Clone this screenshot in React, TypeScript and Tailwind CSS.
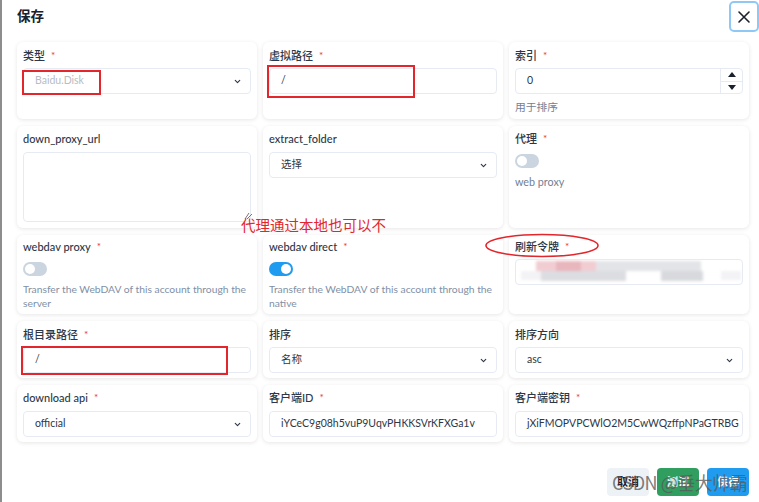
import React from "react";

const FONT = { fontFamily: 'Lato, "Noto Sans CJK SC", "Noto Sans", sans-serif' };

function Label({ text, req }: { text: string; req?: boolean }) {
  return (
    <div className="h-[16px] flex items-center text-[11px] text-[#2d3748] font-medium leading-none">
      <span>{text}</span>
      {req && <span className="ml-[6px] text-[#e53e3e] text-[10px]">*</span>}
    </div>
  );
}

function Chevron() {
  return (
    <svg width="9" height="9" viewBox="0 0 24 24" fill="none" stroke="#2d3748" strokeWidth="3" strokeLinecap="round" strokeLinejoin="round">
      <path d="M6 9l6 6 6-6" />
    </svg>
  );
}

function Input({ value, muted }: { value: string; muted?: boolean }) {
  return (
    <div className="h-[26px] rounded-[4px] border border-[#e6ebf3] flex items-center pl-[11px] text-[10.5px] bg-white overflow-hidden whitespace-nowrap">
      <span className={muted ? "text-[#b8bcc4]" : "text-[#2d3748]"}>{value}</span>
    </div>
  );
}

function Select({ value, muted }: { value: string; muted?: boolean }) {
  return (
    <div className="h-[26px] rounded-[4px] border border-[#e6ebf3] flex items-center justify-between pl-[11px] pr-[8px] text-[10.5px] bg-white">
      <span className={muted ? "text-[#b8bcc4]" : "text-[#2d3748]"}>{value}</span>
      <Chevron />
    </div>
  );
}

function Toggle({ on }: { on?: boolean }) {
  return (
    <div className={`w-[24px] h-[14px] rounded-full flex items-center px-[2px] ${on ? "bg-[#1f9bf0] justify-end" : "bg-[#cbd5e0] justify-start"}`}>
      <div className="w-[10px] h-[10px] rounded-full bg-white" />
    </div>
  );
}

function Card({ children, cls }: { children: React.ReactNode; cls: string }) {
  return (
    <div className={`bg-white rounded-[6px] shadow-[0_1px_4px_rgba(0,0,0,0.10)] px-[6px] overflow-hidden ${cls}`}>{children}</div>
  );
}

export default function App() {
  return (
    <div className="relative w-[759px] h-[502px] bg-white border-l-2 border-[#8d8d8d] overflow-hidden" style={FONT}>
      {/* header */}
      <div className="h-[42px] flex items-start justify-between pl-[15px]">
        <div className="mt-[6px] text-[13.5px] font-bold text-[#1a202c]">保存</div>
        <div className="mt-[1px] w-[30px] h-[31px] rounded-[5px] border-2 border-[#90c8f5] flex items-center justify-center">
          <svg width="14" height="14" viewBox="0 0 14 14" stroke="#1a202c" strokeWidth="1.6" strokeLinecap="round">
            <path d="M2 2l10 10M12 2L2 12" />
          </svg>
        </div>
      </div>

      {/* grid */}
      <div className="grid grid-cols-3 gap-x-[6px] gap-y-[7px] pl-[15px] pr-[10px]">
        {/* row 1 */}
        <Card cls="h-[77px] pt-[5px]">
          <Label text="类型" req />
          <div className="mt-[5px]"><Select value="Baidu.Disk" muted /></div>
        </Card>
        <Card cls="h-[77px] pt-[5px]">
          <Label text="虚拟路径" req />
          <div className="mt-[5px]"><Input value="/" /></div>
        </Card>
        <Card cls="h-[77px] pt-[5px]">
          <Label text="索引" req />
          <div className="mt-[5px] h-[26px] rounded-[4px] border border-[#e6ebf3] flex items-center text-[10.5px]">
            <span className="flex-1 pl-[11px] text-[#2d3748]">0</span>
            <div className="w-[22px] h-full border-l border-[#e6ebf3] flex flex-col">
              <div className="flex-1 flex items-center justify-center border-b border-[#e6ebf3]">
                <svg width="8" height="5" viewBox="0 0 8 5"><path d="M4 0L8 5H0z" fill="#1a202c" /></svg>
              </div>
              <div className="flex-1 flex items-center justify-center">
                <svg width="8" height="5" viewBox="0 0 8 5"><path d="M0 0h8L4 5z" fill="#1a202c" /></svg>
              </div>
            </div>
          </div>
          <div className="mt-[5px] text-[10.75px] text-[#718096] leading-[16px]">用于排序</div>
        </Card>

        {/* row 2 */}
        <Card cls="h-[102px] pt-[4px]">
          <Label text="down_proxy_url" />
          <div className="mt-[6px] h-[70px] rounded-[4px] border border-[#e6ebf3]" />
        </Card>
        <Card cls="h-[102px] pt-[4px]">
          <Label text="extract_folder" />
          <div className="mt-[6px]"><Select value="选择" /></div>
        </Card>
        <Card cls="h-[102px] pt-[4px]">
          <Label text="代理" req />
          <div className="mt-[8px]"><Toggle /></div>
          <div className="mt-[6px] text-[10.75px] text-[#718096] leading-[16px]">web proxy</div>
        </Card>

        {/* row 3 */}
        <Card cls="h-[79px] pt-[3px]">
          <Label text="webdav proxy" req />
          <div className="mt-[8px]"><Toggle /></div>
          <div className="mt-[6px] text-[10.3px] text-[#8190a5] leading-[14px]">Transfer the WebDAV of this account through the server</div>
        </Card>
        <Card cls="h-[79px] pt-[3px]">
          <Label text="webdav direct" req />
          <div className="mt-[8px]"><Toggle on /></div>
          <div className="mt-[6px] text-[10.3px] text-[#8190a5] leading-[14px]">Transfer the WebDAV of this account through the native</div>
        </Card>
        <Card cls="h-[79px] pt-[3px]">
          <Label text="刷新令牌" req />
          <div className="mt-[5px] h-[26px] rounded-[4px] border border-[#e6ebf3] relative overflow-hidden">
            <div className="absolute inset-0 blur-[1.5px]">
              <div className="absolute left-[20px] top-[1px] w-[60px] h-[10px] bg-[#f1cdd2]" />
              <div className="absolute left-[40px] top-[1px] w-[25px] h-[10px] bg-[#e8b6bd]" />
              <div className="absolute left-[80px] top-[1px] w-[105px] h-[10px] bg-[#e3e4e8]" />
              <div className="absolute left-[5px] top-[11px] w-[20px] h-[9px] bg-[#f3f3f5]" />
              <div className="absolute left-[25px] top-[11px] w-[85px] h-[10px] bg-[#dcdde1]" />
              <div className="absolute left-[145px] top-[11px] w-[42px] h-[10px] bg-[#d8d9dd]" />
              <div className="absolute left-[205px] top-[11px] w-[20px] h-[9px] bg-[#f3f3f5]" />
            </div>
          </div>
        </Card>

        {/* row 4 */}
        <Card cls="h-[57px] pt-[5px]">
          <Label text="根目录路径" req />
          <div className="mt-[5px]"><Input value="/" /></div>
        </Card>
        <Card cls="h-[57px] pt-[5px]">
          <Label text="排序" />
          <div className="mt-[5px]"><Select value="名称" /></div>
        </Card>
        <Card cls="h-[57px] pt-[5px]">
          <Label text="排序方向" />
          <div className="mt-[5px]"><Select value="asc" /></div>
        </Card>

        {/* row 5 */}
        <Card cls="h-[57px] pt-[4px]">
          <Label text="download api" req />
          <div className="mt-[6px]"><Select value="official" /></div>
        </Card>
        <Card cls="h-[57px] pt-[4px]">
          <Label text="客户端ID" req />
          <div className="mt-[6px]"><Input value="iYCeC9g08h5vuP9UqvPHKKSVrKFXGa1v" /></div>
        </Card>
        <Card cls="h-[57px] pt-[4px]">
          <Label text="客户端密钥" req />
          <div className="mt-[6px]"><Input value="jXiFMOPVPCWlO2M5CwWQzffpNPaGTRBG" /></div>
        </Card>
      </div>

      {/* footer buttons */}
      <div className="mt-[26px] flex justify-end gap-[8px] pr-[10px]">
        <div className="w-[42px] h-[28px] rounded-[4px] bg-[#edf2f7] flex items-center justify-center text-[11px] text-[#1a202c] font-semibold">取消</div>
        <div className="w-[42px] h-[28px] rounded-[4px] bg-[#2f9e5f] flex items-center justify-center text-[11px] text-white font-semibold">测试</div>
        <div className="w-[42px] h-[28px] rounded-[4px] bg-[#1f9bf0] flex items-center justify-center text-[11px] text-white font-semibold">保存</div>
      </div>

      {/* annotations */}
      <div className="absolute left-[20px] top-[70px] w-[79px] h-[25px] border-2 border-[#e3262b]" />
      <div className="absolute left-[265px] top-[65px] w-[148px] h-[33px] border-2 border-[#e3262b]" />
      <div className="absolute left-[19px] top-[346px] w-[207px] h-[29px] border-2 border-[#e3262b]" />
      <svg className="absolute left-[481px] top-[232px]" width="118" height="27" viewBox="0 0 118 27">
        <ellipse cx="59" cy="13.5" rx="56" ry="11" fill="none" stroke="#e3262b" strokeWidth="1.6" />
      </svg>
      <svg className="absolute left-[242px] top-[212px]" width="10" height="8" viewBox="0 0 10 8">
        <path d="M1 7L5 1M3 7L8 2" stroke="#555" strokeWidth="0.8" fill="none" />
      </svg>
      <div className="absolute left-[239px] top-[215px] text-[14.5px] leading-[20px] text-[#e3262b] whitespace-nowrap" style={{ fontFamily: '"Noto Sans CJK SC", sans-serif' }}>
        代理通过本地也可以不
      </div>

      {/* watermark */}
      <div className="absolute left-[610px] top-[470px] text-[18px] leading-[24px] text-[#5a5a5a]/80 whitespace-nowrap tracking-[-0.5px]" style={{ fontFamily: '"Noto Sans CJK SC", sans-serif' }}>
        CSDN @垂大帅霸
      </div>
    </div>
  );
}
